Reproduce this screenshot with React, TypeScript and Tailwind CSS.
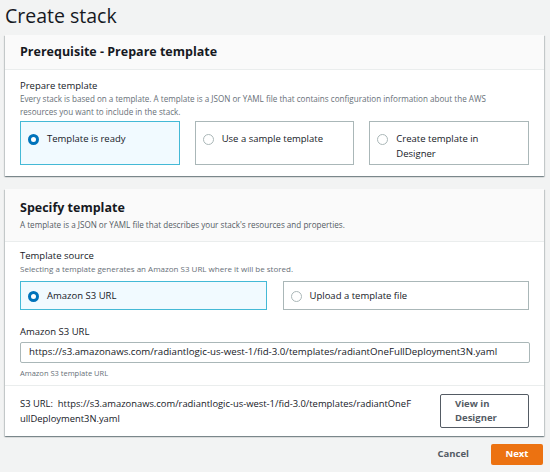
import React from "react";

const Radio = ({ checked }: { checked?: boolean }) =>
  checked ? (
    <span className="w-[11px] h-[11px] rounded-full border-[3px] border-[#0073bb] bg-white shrink-0" />
  ) : (
    <span className="w-[11px] h-[11px] rounded-full border border-[#aab7b8] bg-white shrink-0" />
  );

interface CardProps {
  label: React.ReactNode;
  checked?: boolean;
  className?: string;
}

const RadioCard = ({ label, checked, className }: CardProps) => (
  <div
    className={
      "flex items-start gap-[8px] px-[7px] pt-[9px] " +
      (checked ? "bg-[#f1faff] border border-[#44b9d6] " : "bg-white border border-[#aab7b8] ") +
      (className || "")
    }
  >
    <span className="mt-[3px] flex">
      <Radio checked={checked} />
    </span>
    <span className="text-[9.5px] leading-[15px] font-medium text-[#16191f]">{label}</span>
  </div>
);

const panelShadow =
  "shadow-[0_1px_1px_0_rgba(0,28,36,0.3),1px_1px_1px_0_rgba(0,28,36,0.15),-1px_1px_1px_0_rgba(0,28,36,0.15)]";

const App = () => {
  return (
    <div className="w-[550px] h-[472px] overflow-hidden bg-[#f2f3f3] text-[#16191f] font-['Open_Sans',sans-serif]">
      <h1 className="pl-[5px] pt-[1px] text-[19.5px] leading-[30px] font-normal text-[#16191f]">Create stack</h1>

      {/* Prerequisite panel */}
      <div className={"mx-[5px] mt-[4px] w-[539px] bg-white " + panelShadow}>
        <div className="h-[35px] flex items-center px-[15px] bg-[#fafafa] border-b border-[#eaeded]">
          <h2 className="text-[12.5px] font-bold">Prerequisite - Prepare template</h2>
        </div>
        <div className="px-[15px] pt-[9px] pb-[11px]">
          <div className="text-[9.5px] leading-[13px]">Prepare template</div>
          <p className="text-[8.1px] leading-[13px] text-[#687078] w-[495px]">
            Every stack is based on a template. A template is a JSON or YAML file that contains configuration information about the AWS resources you want to include in the stack.
          </p>
          <div className="flex gap-[15px] mt-[3px]">
            <RadioCard checked label="Template is ready" className="w-[160px] h-[44px]" />
            <RadioCard label="Use a sample template" className="w-[160px] h-[44px]" />
            <RadioCard
              label={
                <>
                  Create template in
                  <br />
                  Designer
                </>
              }
              className="w-[160px] h-[44px]"
            />
          </div>
        </div>
      </div>

      {/* Specify template panel */}
      <div className={"mx-[5px] mt-[13px] w-[539px] bg-white " + panelShadow}>
        <div className="px-[15px] pt-[10px] pb-[10px] bg-[#fafafa] border-b border-[#eaeded]">
          <h2 className="text-[12.5px] leading-[18px] font-bold">Specify template</h2>
          <p className="text-[8.1px] leading-[13px] text-[#545b64] mt-[1px]">
            A template is a JSON or YAML file that describes your stack's resources and properties.
          </p>
        </div>
        <div className="px-[15px] pt-[7px] pb-[6px]">
          <div className="text-[9.5px] leading-[13px]">Template source</div>
          <p className="text-[8px] leading-[13px] text-[#687078]">
            Selecting a template generates an Amazon S3 URL where it will be stored.
          </p>
          <div className="flex gap-[16px] mt-[6px]">
            <RadioCard checked label="Amazon S3 URL" className="w-[247px] h-[29px] !pt-[6px]" />
            <RadioCard label="Upload a template file" className="w-[247px] h-[29px] !pt-[6px]" />
          </div>
          <div className="text-[9.5px] leading-[13px] mt-[15px]">Amazon S3 URL</div>
          <div className="mt-[4px] h-[21px] w-[510px] border border-[#aab7b8] rounded-[2px] flex items-center px-[8px] whitespace-nowrap overflow-hidden text-[9.7px] text-[#16191f]">
            https://s3.amazonaws.com/radiantlogic-us-west-1/fid-3.0/templates/radiantOneFullDeployment3N.yaml
          </div>
          <div className="mt-[4px] text-[7.5px] leading-[12px] text-[#687078]">Amazon S3 template URL</div>
        </div>
        <div className="border-t border-[#eaeded] px-[15px] pt-[8px] pb-[8px] flex">
          <div className="w-[420px] overflow-hidden whitespace-nowrap text-[9.4px] leading-[15px] pt-[2px]">
            S3 URL:&nbsp;&nbsp;https://s3.amazonaws.com/radiantlogic-us-west-1/fid-3.0/templates/radiantOneF
            <br />
            ullDeployment3N.yaml
          </div>
          <button className="w-[89px] h-[34px] border border-[#545b64] rounded-[2px] bg-white text-left pl-[14px] text-[9.5px] leading-[14px] font-bold text-[#545b64]">
            View in
            <br />
            Designer
          </button>
        </div>
      </div>

      {/* Footer */}
      <div className="flex justify-end items-center gap-[22px] pr-[7px] mt-[8px]">
        <span className="text-[9.5px] font-bold text-[#545b64]">Cancel</span>
        <button className="w-[52px] h-[21px] bg-[#ec7211] rounded-[2px] text-white text-[9.5px] font-bold">Next</button>
      </div>
    </div>
  );
};

export default App;
